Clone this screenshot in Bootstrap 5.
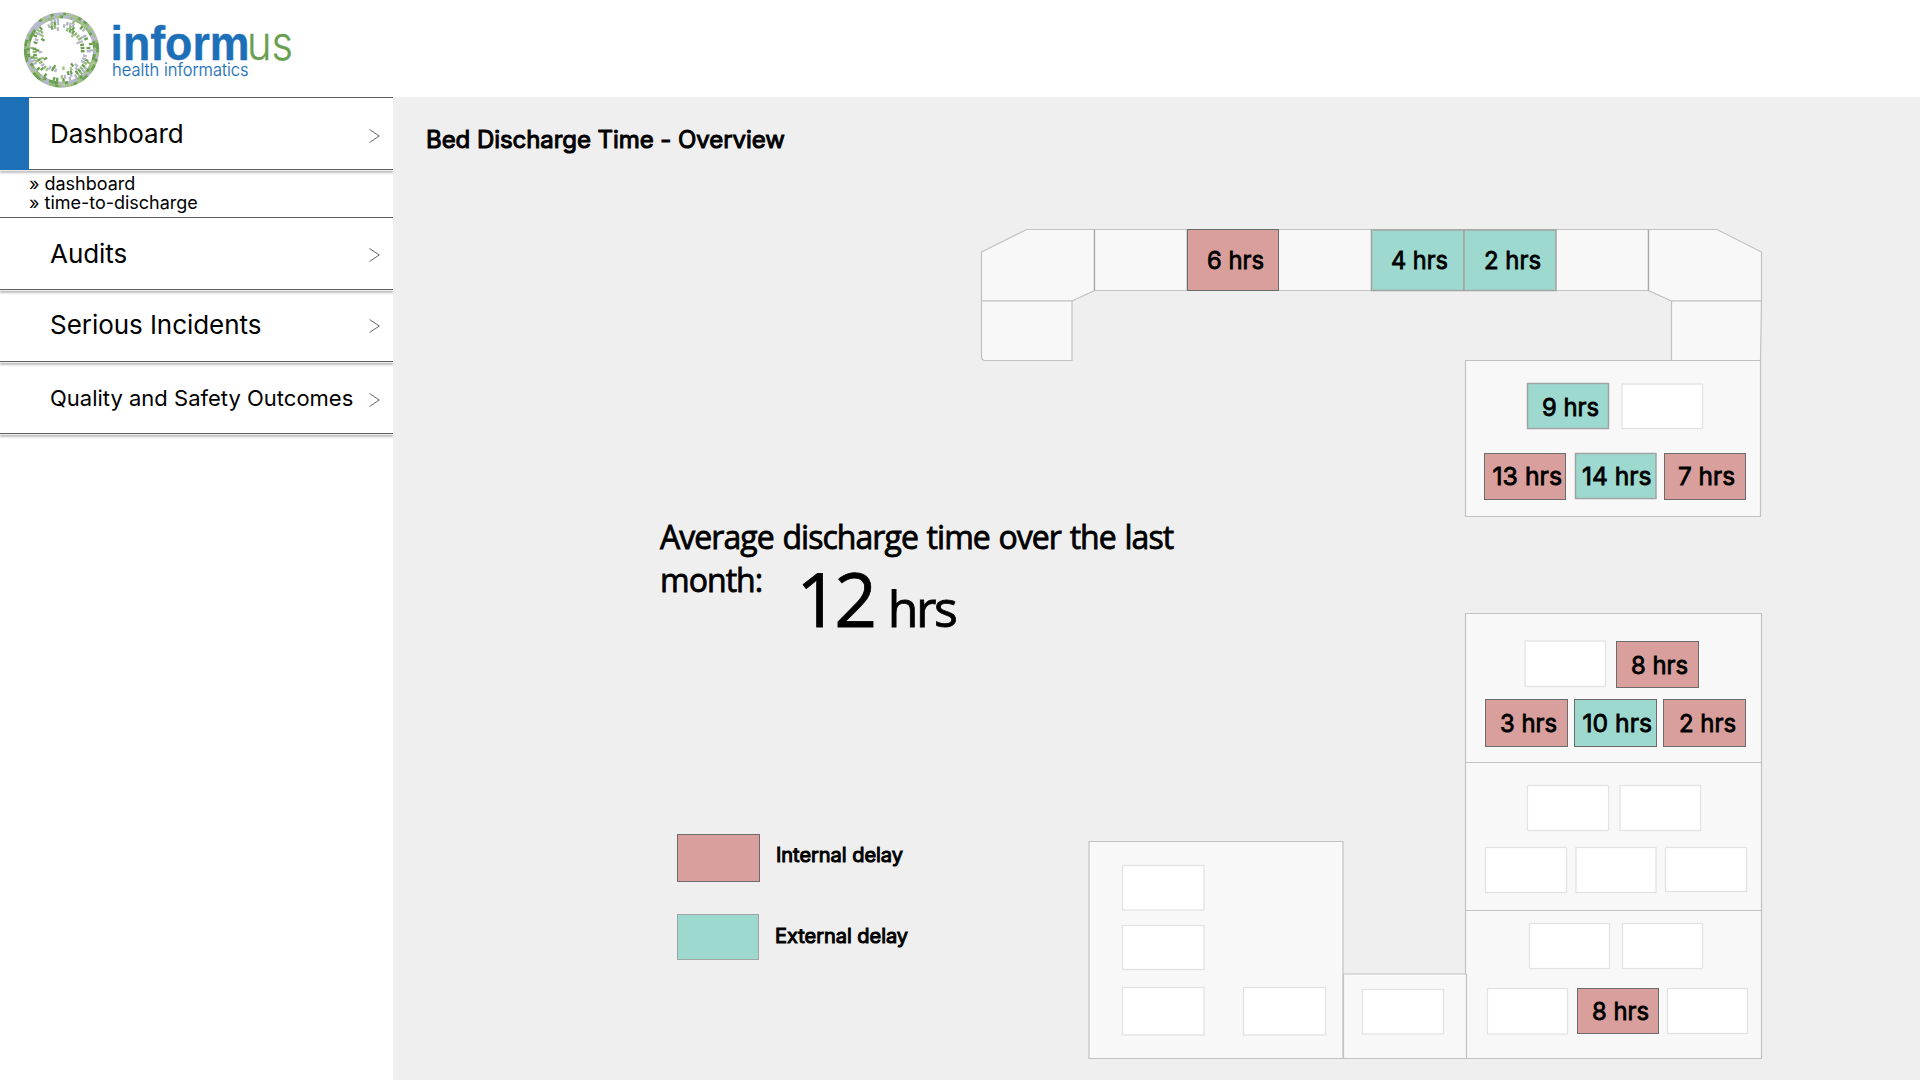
<!DOCTYPE html>
<html lang="en">
<head>
<meta charset="utf-8">
<title>Informus – Bed Discharge Time</title>
<meta name="viewport" content="width=device-width, initial-scale=1">
<link href="https://cdn.jsdelivr.net/npm/bootstrap@5.3.0/dist/css/bootstrap.min.css" rel="stylesheet">
<style>
body{font-family:Inter,"Liberation Sans",sans-serif;color:#000;background:#fff}
.topbar{height:97px}
.sidebar{width:393px}
.menu-item{height:72px;padding:0 13px 0 50px;font-size:26px;letter-spacing:-.05px;color:#000;text-decoration:none;border-bottom:1px solid #5f5f5f;box-shadow:0 1px 0 #ececec,0 3px 2px rgba(0,0,0,.25);position:relative}
.menu-item span{line-height:40px}
.menu-item svg{margin-top:2px}
.menu-item.first{height:73px;border-top:1px solid #5f5f5f}
.menu-item.first svg{margin-top:5px}
.menu-item.first::before{content:"";position:absolute;left:0;top:-1px;width:29px;height:73px;background:#1d70b8}
.menu-item.raised{padding-bottom:2px}
.menu-item.long{font-size:22px;letter-spacing:0}
.menu-item.long svg{margin-top:4px}
.submenu{height:48px;padding:4px 0 0 29px;font-size:18px;line-height:19px;letter-spacing:-.02px;border-bottom:1px solid #5f5f5f}
.submenu a{color:#000;text-decoration:none;display:block}
.board{background:#efefef}
.board h1{font-size:24px;line-height:40px;padding:23px 0 0 33px;font-weight:400;letter-spacing:-.06px}
.inked{-webkit-text-stroke:1px #000}
.average{margin:356px 0 0 267px;font-family:"Open Sans","Noto Sans",sans-serif;font-size:32px;line-height:42.7px;letter-spacing:-.95px;word-spacing:1.3px}
.average.inked{-webkit-text-stroke:.8px #000}
.total{margin:1px 0 0 34px;font-size:75px;line-height:76px;letter-spacing:-5px}
.total small{font-size:50px;letter-spacing:-2.5px;margin-left:0}
.legend{margin:188px 0 0 284px;gap:32.5px;font-size:20px;letter-spacing:-.04px}
.legend span{padding-top:6px}
.legend .swatch.ext + span{padding-top:7px}
.swatch{width:83px;height:48px;border:1px solid #6c6c6c;background:#d99f9c}
.swatch.ext{width:82px;height:46px;border-color:#a0a5a3;background:#9ed9d0}
.plan text{font-size:24.5px;stroke:#000;stroke-width:.8}
.room{fill:#f8f8f8;stroke:#c2c2c2;stroke-width:1.2}
.bed{fill:#fff;stroke:#e3e3e3;stroke-width:1.3}
.int{fill:#d99f9c;stroke:#6c6c6c}
.ext-bed{fill:#9ed9d0;stroke:#a0a5a3;stroke-width:1.5}
.ext-bed.deep{stroke:#6c6c6c;stroke-width:1}
</style>
</head>
<body class="vh-100 overflow-hidden d-flex flex-column">
<header class="topbar flex-shrink-0">
<svg width="320" height="97" viewBox="0 0 320 97" role="img" aria-label="informus health informatics">
<g id="ring"></g>
<text x="110.500" y="59.500" font-family="Liberation Sans" font-weight="700" font-size="48" fill="#1d70b8" stroke="#1d70b8" stroke-width=".4" textLength="139" lengthAdjust="spacingAndGlyphs">inform</text>
<text x="247" y="59.500" font-weight="300" font-size="47" fill="#689f50" stroke="#689f50" stroke-width=".3" textLength="46" lengthAdjust="spacingAndGlyphs">us</text>
<text x="112" y="76" font-weight="300" font-size="17.500" fill="#1d70b8" stroke="#1d70b8" stroke-width=".2" textLength="136.500" lengthAdjust="spacingAndGlyphs">health informatics</text>
</svg>
</header>
<div class="d-flex flex-grow-1">
<nav class="sidebar flex-shrink-0 d-flex flex-column">
<a href="#" class="menu-item first d-flex align-items-center justify-content-between"><span>Dashboard</span><svg width="11" height="14" fill="none" stroke="#666"><path d="M.5 .5 10.300 7 .5 13.500"/></svg></a>
<div class="submenu"><a href="#">» dashboard</a><a href="#">» time-to-discharge</a></div>
<a href="#" class="menu-item d-flex align-items-center justify-content-between"><span>Audits</span><svg width="11" height="14" fill="none" stroke="#666"><path d="M.5 .5 10.300 7 .5 13.500"/></svg></a>
<a href="#" class="menu-item raised d-flex align-items-center justify-content-between"><span>Serious Incidents</span><svg width="11" height="14" fill="none" stroke="#666"><path d="M.5 .5 10.300 7 .5 13.500"/></svg></a>
<a href="#" class="menu-item long d-flex align-items-center justify-content-between"><span>Quality and Safety Outcomes</span><svg width="11" height="14" fill="none" stroke="#666"><path d="M.5 .5 10.300 7 .5 13.500"/></svg></a>
</nav>
<main class="board flex-grow-1 position-relative">
<h1 class="inked m-0">Bed Discharge Time - Overview</h1>
<section class="average inked">
<div>Average discharge time over the last</div>
<div class="d-flex align-items-start"><span>month:</span><div class="total">12 <small>hrs</small></div></div>
</section>
<section class="legend d-flex flex-column">
<div class="d-flex"><div class="swatch"></div><span class="inked ms-3">Internal delay</span></div>
<div class="d-flex"><div class="swatch ext"></div><span class="inked ms-3">External delay</span></div>
</section>
<svg class="plan position-absolute top-0 start-0" width="1527" height="983" viewBox="393 97 1527 983">
<g class="room">
<path d="M981.500 252 1026.500 229.500H1094.500V290.500L1072 301H981.500Z"/>
<path d="M981.500 301H1072V360.500H985.500Q981.500 360.500 981.500 356.500Z"/>
<path d="M1094.500 229.500H1648.500V290.500H1094.500ZM1187 229.500V290.500M1371.500 229.500V290.500"/>
<path d="M1648.500 229.500H1717L1761.500 252V301H1671.500L1648.500 290.500Z"/>
<path d="M1671.500 301H1761.500L1760.500 360.500H1671.500Z"/>
<path d="M1465.500 360.500H1760.500V516.500H1465.500Z"/>
<path d="M1465.500 613.500H1761.500V762.500H1465.500Z"/>
<path d="M1465.500 762.500H1761.500V910.500H1465.500Z"/>
<path d="M1465.500 910.500H1761.500V1058.500H1465.500Z"/>
<path d="M1089 841.500H1343V1058.500H1089Z"/>
<path d="M1343.500 974H1466.500V1058.500H1343.500Z"/>
<path d="M1094.500 229.500V290.500M1648.500 229.500V290.500" stroke="#a8a8a8"/>
</g>
<g id="beds"></g>
</svg>
</main>
</div>
<script src="https://cdn.jsdelivr.net/npm/bootstrap@5.3.0/dist/js/bootstrap.bundle.min.js"></script>
<script>
// x, y, right, bottom, kind, label, label x, label width, baseline
const beds=[
[1187.5,229.5,1278.5,290.5,'int','6 hrs',1207,57,269.3],
[1371.5,230,1464,290.5,'ext-bed','4 hrs',1391,57,269.3],
[1464,230,1556,290.5,'ext-bed','2 hrs',1484,57,269.3],
[1527.5,383.5,1608.5,428.5,'ext-bed','9 hrs',1542,57,416],
[1622,384,1702.5,428.5],
[1484.5,453.5,1565.5,499.5,'int','13 hrs',1492.5,69.5,485.3],
[1575.5,453.5,1656,498.5,'ext-bed','14 hrs',1582,69.5,485.3],
[1664.5,453.5,1745.5,499.5,'int','7 hrs',1678,57,485.3],
[1525,641,1605.5,686.5],
[1616.5,641.5,1698.5,687.5,'int','8 hrs',1631,57,674],
[1485.5,699.5,1567.5,746.5,'int','3 hrs',1500,57,732.3],
[1574.5,699.5,1656.5,746.5,'ext-bed deep','10 hrs',1582.5,69.5,732.3],
[1663.5,699.5,1745.5,746.5,'int','2 hrs',1679,57,732.3],
[1527.5,785.5,1608.5,830.5],[1620,785.5,1700.5,830.5],
[1485.5,847.5,1566.5,892.5],[1576,847.5,1656,892.5],[1665.5,847.5,1746.5,891.5],
[1529.5,923.5,1609.5,968.5],[1622.5,923.5,1702.5,968.5],
[1487.5,988.5,1567.5,1034],[1577.5,988.5,1658.5,1033.5,'int','8 hrs',1592,57,1020],[1667.5,988.5,1747.5,1033.5],
[1362.5,989.5,1443.5,1034],
[1122.5,865.5,1204,910],[1122.5,925.5,1204,969.5],[1122.5,987.5,1204,1035],[1243.5,987.5,1325.5,1035]];
document.getElementById('beds').innerHTML=beds.map(([x,y,r,b,k,t,tx,tw,ty])=>
`<rect class="${k||'bed'}" x="${x}" y="${y}" width="${r-x}" height="${b-y}"/>`+(t?`<text x="${tx}" y="${ty}" textLength="${tw}" lengthAdjust="spacingAndGlyphs">${t}</text>`:'')).join('');
// ring of coloured cells that thins out towards the centre
let seed=7;const rnd=()=>(seed=(seed*16807)%2147483647)/2147483647;
const fillRate=[1,1,.62,.6,.55,.5,.3],tones=['#6a9e50','#6a9e50','#94b97a','#a2c087','#b4b7c9','#b4b7c9'];
let ring='';
fillRate.forEach((rate,i)=>{const r=36-i*2.9,n=Math.round(2*Math.PI*r/3.2);
for(let k=0;k<n;k++){if(rnd()>rate)continue;const a=k*360/n;
ring+=`<rect x="-1.6" y="${-r-1.6}" width="${i>1?2.3:3.5}" height="${i>1?3.8:3.1}" fill="${tones[Math.floor(rnd()*6)]}" transform="translate(61.5 50) rotate(${a})"/>`}});
document.getElementById('ring').innerHTML=ring;
</script>
</body>
</html>
